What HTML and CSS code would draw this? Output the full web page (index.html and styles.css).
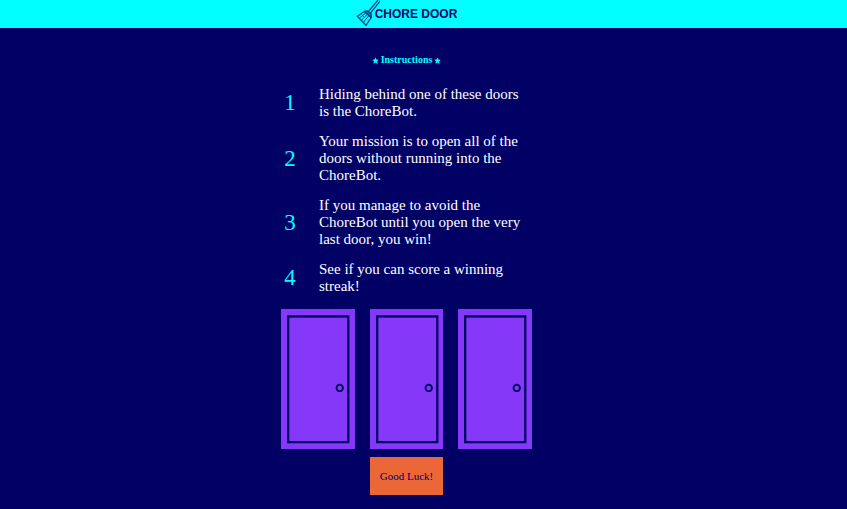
FILE: index.html
```html
<!DOCTYPE html>
<html lang="en">
<head>
<meta charset="utf-8">
<meta name="viewport" content="width=device-width, initial-scale=1">
<title>Chore Door</title>
<link rel="stylesheet" href="styles.css">
</head>
<body>
<svg class="defs" aria-hidden="true">
  <symbol id="door" viewBox="0 0 74 140">
    <rect x="7.2" y="7.2" width="60.4" height="126.2" fill="none" stroke="#010165" stroke-width="2.3"/>
    <circle cx="59" cy="79" r="3.2" fill="none" stroke="#010165" stroke-width="1.9"/>
  </symbol>
  <symbol id="star" viewBox="0 0 10 10">
    <path d="M5 .5 6.4 3.5 9.7 3.9 7.3 6.2 7.9 9.5 5 7.9 2.1 9.5 2.7 6.2 .3 3.9 3.6 3.5Z" fill="currentColor"/>
  </symbol>
</svg>
<header class="header">
  <a class="logo" href="#">
    <svg class="broom" viewBox="0 0 24 28" aria-hidden="true">
      <g fill="none" stroke="#0b3f8c" stroke-width="1.3" stroke-linejoin="round">
        <path d="M12 12 22 0M14.2 13.4 25 0" />
        <path d="M8.5 11.5 11.5 11 15.3 14 15.2 17.5Z" fill="#1289bd"/>
        <path d="M8.5 11.5 1.3 16.3 10 25.3 15.2 17.5Z"/>
        <path d="M9.8 13 3.2 18.2M11.3 14.3 5.3 20.3M12.8 15.6 7.4 22.4M5.5 14.5l2.2 2.4" stroke-width=".9"/>
      </g>
    </svg>
    <span>CHORE DOOR</span>
  </a>
</header>
<main class="main">
  <h1 class="title">
    <svg class="star" aria-hidden="true"><use href="#star"/></svg>
    Instructions
    <svg class="star" aria-hidden="true"><use href="#star"/></svg>
  </h1>
  <ol class="steps">
    <li class="step"><span class="number">1</span><p>Hiding behind one of these doors is the ChoreBot.</p></li>
    <li class="step"><span class="number">2</span><p>Your mission is to open all of the doors without running into the ChoreBot.</p></li>
    <li class="step"><span class="number">3</span><p>If you manage to avoid the ChoreBot until you open the very last door, you win!</p></li>
    <li class="step"><span class="number">4</span><p>See if you can score a winning streak!</p></li>
  </ol>
  <div class="doors">
    <button class="door" type="button" aria-label="Door 1"><svg><use href="#door"/></svg></button>
    <button class="door" type="button" aria-label="Door 2"><svg><use href="#door"/></svg></button>
    <button class="door" type="button" aria-label="Door 3"><svg><use href="#door"/></svg></button>
    <button class="start" type="button">Good Luck!</button>
  </div>
</main>
</body>
</html>
```
FILE: styles.css
```css
* {
  box-sizing: border-box;
}

body {
  margin: 0;
  background: #010165;
  color: #fff;
  font-family: "Liberation Serif", "Times New Roman", serif;
}

.defs {
  display: none;
}

.header {
  display: flex;
  justify-content: center;
  padding-right: 34px;
  background: #0ff;
}

.logo {
  display: flex;
  align-items: center;
  height: 28px;
  color: #010165;
  font: 700 12px/28px "Liberation Sans", Arial, sans-serif;
  text-decoration: none;
}

.broom {
  width: 24px;
  height: 28px;
  margin-right: -5px;
}

.main {
  display: flex;
  flex-direction: column;
  align-items: center;
  padding: 26px 34px 14px 0;
}

.title {
  display: flex;
  align-items: center;
  gap: 2px;
  margin: 0 0 20px;
  color: #0ff;
  font-size: 10px;
  line-height: 12px;
}

.star {
  width: 7px;
  height: 7px;
}

.steps {
  display: flex;
  flex-direction: column;
  gap: 13px;
  width: 251px;
  margin: 0 0 14px;
  padding: 0;
  list-style: none;
}

.step {
  display: grid;
  grid-template-columns: 18px 207px;
  column-gap: 20px;
  align-items: center;
}

.step p {
  margin: 0;
  font-size: 15px;
  line-height: 17px;
}

.number {
  color: #0ff;
  font-size: 23px;
  line-height: 26px;
  text-align: center;
}

.doors {
  display: grid;
  grid-template-columns: repeat(3, 1fr);
  gap: 8px 15px;
  width: 251px;
}

.door {
  padding: 0;
  border: 0;
  background: #8538f7;
  cursor: pointer;
}

.door svg {
  display: block;
  width: 100%;
  height: 140px;
}

.start {
  grid-column: 2;
  height: 38px;
  padding: 0;
  border: 0;
  background: #ec6738;
  color: #010165;
  font-family: inherit;
  font-size: 11px;
  cursor: pointer;
}
```
